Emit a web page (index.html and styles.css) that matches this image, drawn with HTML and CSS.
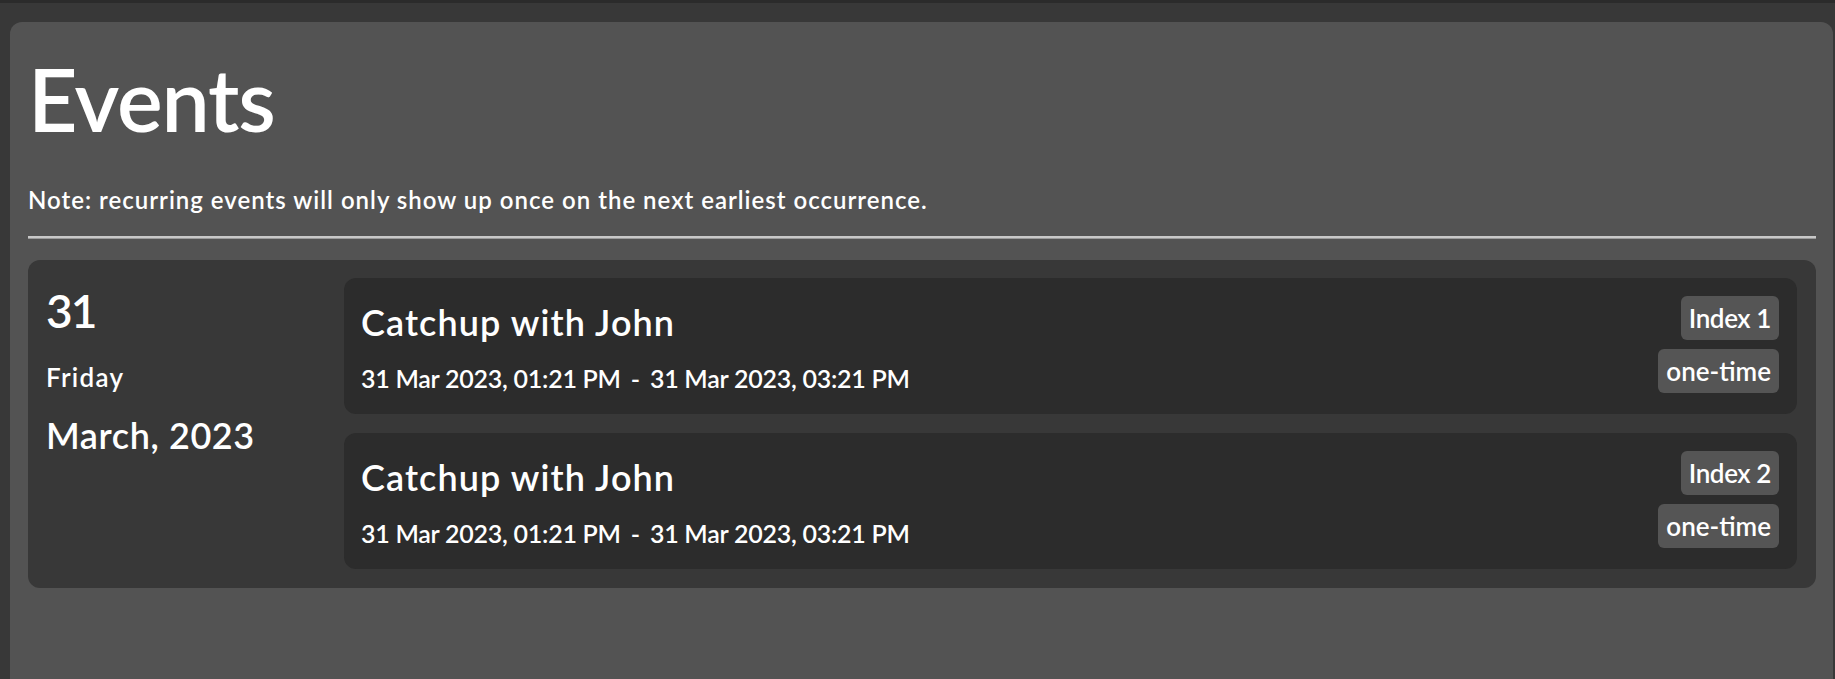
FILE: index.html
```html
<!DOCTYPE html>
<html>
<head>
<meta charset="utf-8">
<link rel="stylesheet" href="styles.css">
</head>
<body>
<div class="panel">
  <h1 class="title">Events</h1>
  <p class="note">Note: recurring events will only show up once on the next earliest occurrence.</p>
  <div class="rule"></div>
  <div class="day">
    <div class="date-col">
      <div class="day-num">31</div>
      <div class="weekday">Friday</div>
      <div class="month">March, 2023</div>
    </div>
    <div class="events">
      <div class="event">
        <div class="event-info">
          <div class="event-name">Catchup with John</div>
          <div class="event-time"><span>31 Mar 2023, 01:21 PM</span><span class="sep">-</span><span>31 Mar 2023, 03:21 PM</span></div>
        </div>
        <div class="tags">
          <span class="tag">Index 1</span>
          <span class="tag">one-time</span>
        </div>
      </div>
      <div class="event">
        <div class="event-info">
          <div class="event-name">Catchup with John</div>
          <div class="event-time"><span>31 Mar 2023, 01:21 PM</span><span class="sep">-</span><span>31 Mar 2023, 03:21 PM</span></div>
        </div>
        <div class="tags">
          <span class="tag">Index 2</span>
          <span class="tag">one-time</span>
        </div>
      </div>
    </div>
  </div>
</div>
</body>
</html>
```
FILE: styles.css
```css
html, body {
  margin: 0;
  height: 100%;
}
body {
  background: #383838;
  border-top: 3px solid #2b2b2b;
  box-sizing: border-box;
  padding: 19px 2px 0 10px;
  font-family: "Lato", "Open Sans", sans-serif;
  font-weight: 600;
  color: #ffffff;
  overflow: hidden;
}
.panel {
  background: #535353;
  border-radius: 12px 12px 0 0;
  padding: 0 17px 0 18px;
  height: 100%;
  box-sizing: border-box;
}
.title {
  margin: 0;
  padding-top: 34px;
  font-size: 86px;
  font-weight: 600;
  line-height: 86px;
  letter-spacing: -1.2px;
}
.note {
  margin: 43px 0 0;
  font-size: 24px;
  line-height: 30px;
  letter-spacing: 1px;
}
.rule {
  margin-top: 21px;
  height: 2px;
  background: #c8c8c8;
  border-bottom: 1px solid #9a9a9a;
}
.day {
  margin-top: 21px;
  background: #383838;
  border-radius: 12px;
  display: flex;
  padding: 18px 19px 19px 18px;
}
.date-col {
  width: 298px;
  flex: none;
}
.day-num {
  font-size: 46px;
  line-height: 52px;
  margin-top: 7px;
  letter-spacing: -2px;
}
.weekday {
  font-size: 26px;
  line-height: 30px;
  margin-top: 25px;
  letter-spacing: 1.3px;
}
.month {
  font-size: 36px;
  line-height: 40px;
  margin-top: 23px;
  letter-spacing: 0.6px;
}
.events {
  flex: 1;
  display: flex;
  flex-direction: column;
  gap: 19px;
}
.event {
  background: #2c2c2c;
  border-radius: 12px;
  height: 136px;
  box-sizing: border-box;
  padding: 18px 18px 18px 17px;
  display: flex;
  justify-content: space-between;
}
.event-info {
  display: flex;
  flex-direction: column;
}
.event-name {
  font-size: 36px;
  line-height: 40px;
  margin-top: 6px;
  letter-spacing: 1.1px;
}
.event-time {
  font-size: 25px;
  line-height: 30px;
  margin-top: 21px;
  display: flex;
  gap: 10px;
  letter-spacing: -0.25px;
}
.tags {
  display: flex;
  flex-direction: column;
  align-items: flex-end;
  gap: 9px;
}
.tag {
  background: #555555;
  border-radius: 6px;
  height: 44px;
  line-height: 44px;
  padding: 0 8px;
  font-size: 26px;
}
.tag:first-child {
  letter-spacing: -0.4px;
}
```
